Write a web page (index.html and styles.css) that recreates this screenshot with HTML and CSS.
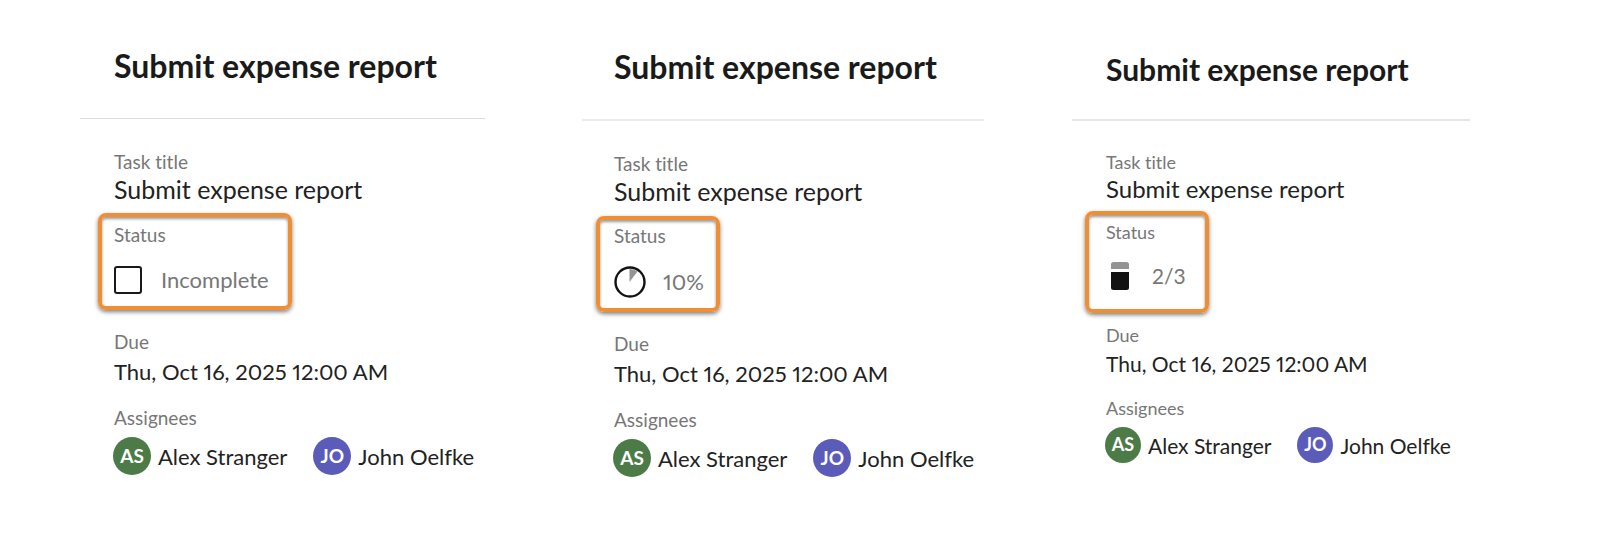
FILE: index.html
```html
<!DOCTYPE html>
<html lang="en">
<head>
  <meta charset="UTF-8">
  <title>Submit expense report</title>
  <link rel="stylesheet" href="styles.css">
</head>
<body>
  <main class="cards">
    <section class="card">
      <h2 class="card-title">Submit expense report</h2>
      <div class="card-body">
        <div class="label">Task title</div>
        <div class="value">Submit expense report</div>

        <div class="status">
          <div class="label">Status</div>
          <div class="status-row">
            <input id="done" class="checkbox" type="checkbox">
            <label for="done">Incomplete</label>
          </div>
        </div>

        <div class="label">Due</div>
        <div class="date">Thu, Oct 16, 2025 12:00 AM</div>

        <div class="label">Assignees</div>
        <ul class="assignees">
          <li><span class="avatar green">AS</span>Alex Stranger</li>
          <li><span class="avatar purple">JO</span>John Oelfke</li>
        </ul>
      </div>
    </section>

    <section class="card card-percent">
      <h2 class="card-title">Submit expense report</h2>
      <div class="card-body">
        <div class="label">Task title</div>
        <div class="value">Submit expense report</div>

        <div class="status">
          <div class="label">Status</div>
          <div class="status-row">
            <svg class="pie" width="32" height="32" viewBox="0 0 32 32">
              <path d="M15.500 16V3A13 13 0 0 1 23.500 5.500Z" fill="#949494"/>
              <circle cx="16" cy="16" r="14.500" fill="none" stroke="#121212" stroke-width="2.400"/>
            </svg>
            <span>10%</span>
          </div>
        </div>

        <div class="label">Due</div>
        <div class="date">Thu, Oct 16, 2025 12:00 AM</div>

        <div class="label">Assignees</div>
        <ul class="assignees">
          <li><span class="avatar green">AS</span>Alex Stranger</li>
          <li><span class="avatar purple">JO</span>John Oelfke</li>
        </ul>
      </div>
    </section>

    <section class="card card-steps">
      <h2 class="card-title">Submit expense report</h2>
      <div class="card-body">
        <div class="label">Task title</div>
        <div class="value">Submit expense report</div>

        <div class="status">
          <div class="label">Status</div>
          <div class="status-row">
            <svg class="steps" width="28" height="28" viewBox="0 0 28 28">
              <path d="M5 7V2.500A2.500 2.500 0 0 1 7.500 0H20.500A2.500 2.500 0 0 1 23 2.500V7Z" fill="#949494"/>
              <path d="M5 10H23V25.500A2.500 2.500 0 0 1 20.500 28H7.500A2.500 2.500 0 0 1 5 25.500Z" fill="#121212"/>
            </svg>
            <span>2/3</span>
          </div>
        </div>

        <div class="label">Due</div>
        <div class="date">Thu, Oct 16, 2025 12:00 AM</div>

        <div class="label">Assignees</div>
        <ul class="assignees">
          <li><span class="avatar green">AS</span>Alex Stranger</li>
          <li><span class="avatar purple">JO</span>John Oelfke</li>
        </ul>
      </div>
    </section>
  </main>
</body>
</html>
```
FILE: styles.css
```css
* {
  box-sizing: border-box;
}

body {
  margin: 0;
  background: #fff;
  color: #222;
  font-family: Lato, sans-serif;
  font-variant-ligatures: none;
  font-variant-numeric: proportional-nums;
}

.cards {
  display: grid;
  grid-template-columns: 502fr 490fr 398fr;
  align-items: start;
  padding: 46px 130px 40px 80px;
}

.card {
  margin-right: 97px;
  white-space: nowrap;
}

.card-title {
  margin: 0;
  padding: 0 0 32px 34px;
  border-bottom: 1px solid #dedede;
  color: #1a1a1a;
  font-size: 32px;
  line-height: 40px;
  font-weight: 700;
}

.card-body {
  padding: 31px 0 0 34px;
}

.label {
  color: #777;
  font-size: 19px;
  line-height: 24px;
}

.value {
  font-size: 25px;
  line-height: 30px;
}

.date {
  margin-bottom: 17px;
  font-size: 22px;
  line-height: 35px;
}

/* highlighted status field */
.status {
  width: fit-content;
  margin: 9px 0 20px -16px;
  padding: 6px 19px 12px 12px;
  border: 4px solid #f08e33;
  border-radius: 8px;
  box-shadow: 0 2px 4px rgba(0, 0, 0, 0.5), inset 0 2px 3px rgba(0, 0, 0, 0.4);
}

.status-row {
  display: flex;
  align-items: center;
  gap: 19px;
  margin-top: 19px;
  color: #777;
  font-size: 22px;
  line-height: 28px;
}

.checkbox {
  appearance: none;
  width: 28px;
  height: 28px;
  margin: 0;
  border: 2px solid #1a1a1a;
  border-radius: 3px;
  background: #fff;
}

.checkbox:checked {
  background: #1a1a1a;
}

.assignees {
  display: flex;
  gap: 26px;
  margin: 7px 0 0 -1px;
  padding: 0;
  list-style: none;
  font-size: 22px;
}

.assignees li {
  display: flex;
  align-items: center;
  gap: 7px;
}

.avatar {
  display: flex;
  align-items: center;
  justify-content: center;
  width: 38px;
  height: 38px;
  padding-bottom: 2px;
  border-radius: 50%;
  color: #fff;
  font-size: 19px;
  font-weight: 700;
}

.green {
  background: #4c7b48;
}

.purple {
  background: #5b5bb9;
}

/* percent complete */
.card-percent {
  margin: 1px 88px 0 0;
}

.card-percent .card-title {
  padding-left: 32px;
  border-bottom: 2px solid #ebebeb;
}

.card-percent .card-body {
  padding: 31px 0 0 32px;
}

.card-percent .status {
  margin: 10px 0 20px -18px;
  padding: 4px 12px 10px 14px;
}

.card-percent .status-row {
  gap: 17px;
  margin-top: 18px;
}

/* steps complete, slightly smaller */
.card-steps {
  margin: 3px 0 0;
}

.card-steps .card-title {
  padding-bottom: 30px;
  border-bottom: 2px solid #e6e6e6;
  font-size: 30px;
}

.card-steps .card-body {
  padding-top: 29px;
}

.card-steps .label {
  font-size: 18px;
}

.card-steps .value {
  font-size: 24px;
}

.card-steps .date {
  margin-bottom: 15px;
  font-size: 21px;
  line-height: 34px;
}

.card-steps .status {
  margin: 7px 0 10px -21px;
  padding: 5px 19px 19px 17px;
}

.card-steps .status-row {
  gap: 18px;
  margin-top: 18px;
  font-size: 21px;
}

.card-steps .assignees {
  font-size: 21px;
}

.card-steps .avatar {
  width: 36px;
  height: 36px;
  font-size: 18px;
}
```
